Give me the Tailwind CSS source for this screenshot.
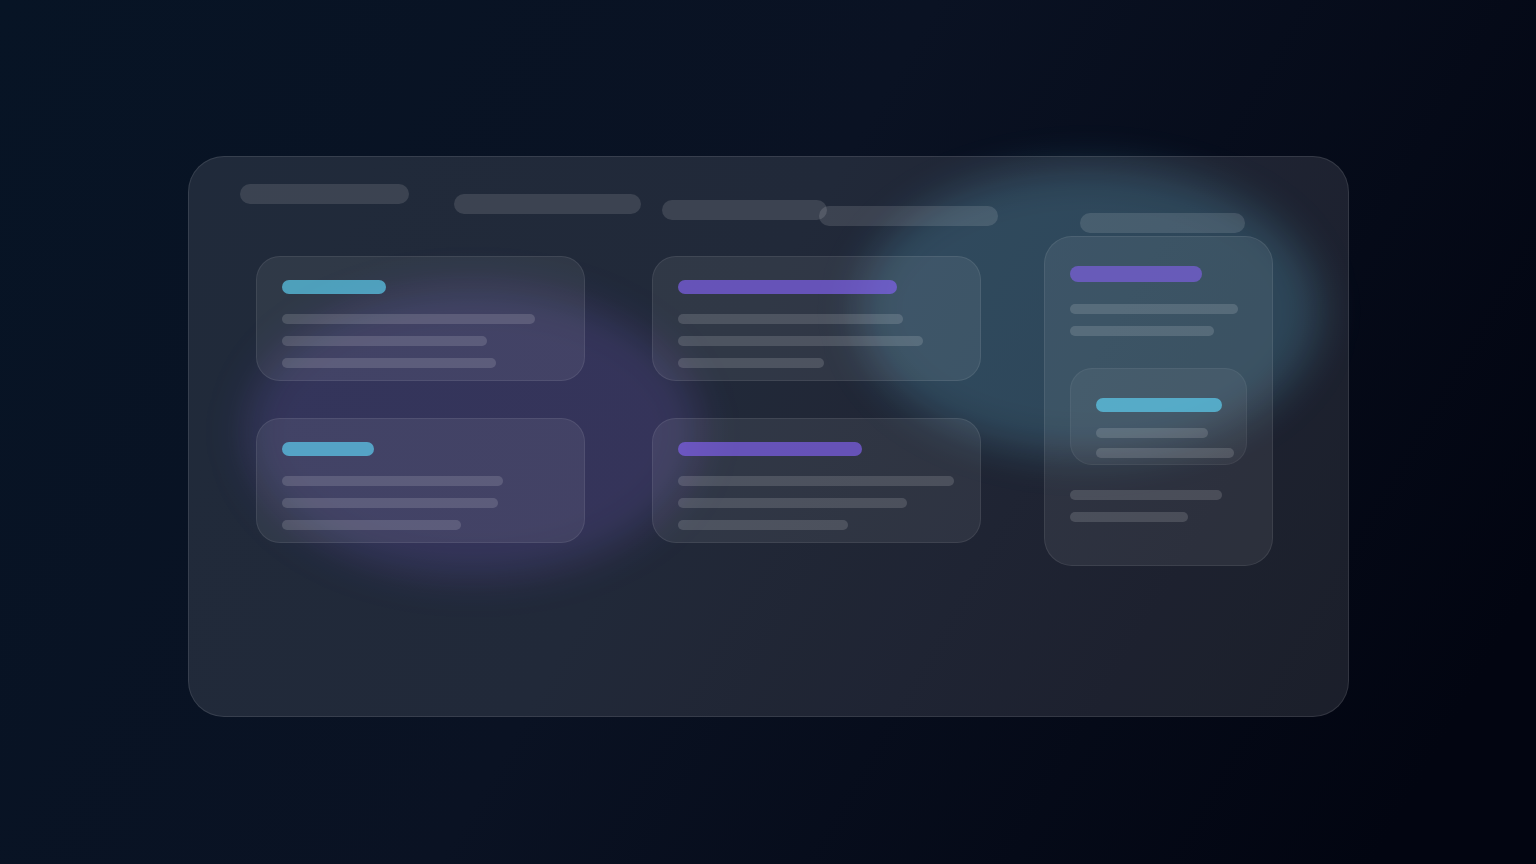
<!DOCTYPE html>
<html lang="en">

<head>
  <meta charset="UTF-8">
  <meta name="viewport" content="width=device-width, initial-scale=1.0">
  <title>Glass Dashboard Skeleton</title>
  <script src="https://cdn.jsdelivr.net/npm/@tailwindcss/browser@4"></script>
</head>

<body class="bg-[#020510]">
  <div class="relative min-h-screen overflow-hidden flex items-center justify-center px-6 pt-2 bg-[linear-gradient(120deg,#071425_0%,#0a1223_46%,#020511_92%)]">

    <!-- glows behind the glass -->
    <div class="absolute left-1/2 top-1/2 w-[452px] h-[288px] -ml-[521px] -mt-[144px] rounded-[50%] bg-[#845ff6]/18 blur-[20px]"></div>
    <div class="absolute left-1/2 top-1/2 w-[460px] h-[288px] ml-[91px] -mt-[265px] rounded-[50%] bg-[#5fd0fb]/20 blur-[20px]"></div>

    <div class="relative w-full max-w-[1161px] min-h-[561px] rounded-[36px] border border-white/10 bg-slate-50/10 pt-[27px]">

      <!-- nav pills -->
      <header class="flex items-start pl-[51px]">
        <div class="h-5 w-[169px] rounded-full bg-white/12"></div>
        <div class="h-5 w-[187px] rounded-full bg-white/12 ml-[45px] mt-[10px]"></div>
        <div class="h-5 w-[165px] rounded-full bg-white/12 ml-[21px] mt-4"></div>
        <div class="h-5 w-[179px] rounded-full bg-white/12 -ml-2 mt-[22px]"></div>
        <div class="h-5 w-[165px] rounded-full bg-white/12 ml-[82px] mt-[29px]"></div>
      </header>

      <div class="flex items-start gap-[63px] pl-[67px] pr-[75px] mt-[3px]">
        <!-- cards -->
        <main class="grow grid grid-cols-2 gap-x-[67px] gap-y-[37px] pt-5">
          <section class="h-[125px] rounded-3xl border border-white/8 bg-slate-50/7 px-[25px] pt-[23px]">
            <div class="h-[14px] w-[104px] rounded-full bg-[#5fd7fb]/65"></div>
            <div class="mt-5 space-y-3">
              <div class="h-[10px] w-[253px] rounded-full bg-white/14"></div>
              <div class="h-[10px] w-[205px] rounded-full bg-white/14"></div>
              <div class="h-[10px] w-[214px] rounded-full bg-white/14"></div>
            </div>
          </section>

          <section class="h-[125px] rounded-3xl border border-white/8 bg-slate-50/7 px-[25px] pt-[23px]">
            <div class="h-[14px] w-[219px] rounded-full bg-[#8463f6]/65"></div>
            <div class="mt-5 space-y-3">
              <div class="h-[10px] w-[225px] rounded-full bg-white/14"></div>
              <div class="h-[10px] w-[245px] rounded-full bg-white/14"></div>
              <div class="h-[10px] w-[146px] rounded-full bg-white/14"></div>
            </div>
          </section>

          <section class="h-[125px] rounded-3xl border border-white/8 bg-slate-50/7 px-[25px] pt-[23px]">
            <div class="h-[14px] w-[92px] rounded-full bg-[#5fd7fb]/65"></div>
            <div class="mt-5 space-y-3">
              <div class="h-[10px] w-[221px] rounded-full bg-white/14"></div>
              <div class="h-[10px] w-[216px] rounded-full bg-white/14"></div>
              <div class="h-[10px] w-[179px] rounded-full bg-white/14"></div>
            </div>
          </section>

          <section class="h-[125px] rounded-3xl border border-white/8 bg-slate-50/7 px-[25px] pt-[23px]">
            <div class="h-[14px] w-[184px] rounded-full bg-[#8463f6]/65"></div>
            <div class="mt-5 space-y-3">
              <div class="h-[10px] w-[276px] rounded-full bg-white/14"></div>
              <div class="h-[10px] w-[229px] rounded-full bg-white/14"></div>
              <div class="h-[10px] w-[170px] rounded-full bg-white/14"></div>
            </div>
          </section>
        </main>

        <!-- sidebar -->
        <aside class="w-[229px] shrink-0 rounded-[28px] border border-white/8 bg-slate-50/7 px-[25px] pt-[29px] pb-[43px]">
          <div class="h-4 w-[132px] rounded-full bg-[#7f60e6]/65"></div>
          <div class="mt-[22px] space-y-3">
            <div class="h-[10px] w-[168px] rounded-full bg-white/14"></div>
            <div class="h-[10px] w-[144px] rounded-full bg-white/14"></div>
          </div>

          <div class="mt-8 h-[97px] rounded-[22px] border border-white/5 bg-white/5 pl-[25px] pt-[29px]">
            <div class="h-[14px] w-[126px] rounded-full bg-[#5fd7fb]/65"></div>
            <div class="mt-4 space-y-[10px]">
              <div class="h-[10px] w-[112px] rounded-full bg-white/14"></div>
              <div class="h-[10px] w-[138px] rounded-full bg-white/14"></div>
            </div>
          </div>

          <div class="mt-[25px] space-y-3">
            <div class="h-[10px] w-[152px] rounded-full bg-white/14"></div>
            <div class="h-[10px] w-[118px] rounded-full bg-white/14"></div>
          </div>
        </aside>
      </div>
    </div>
  </div>
</body>

</html>
